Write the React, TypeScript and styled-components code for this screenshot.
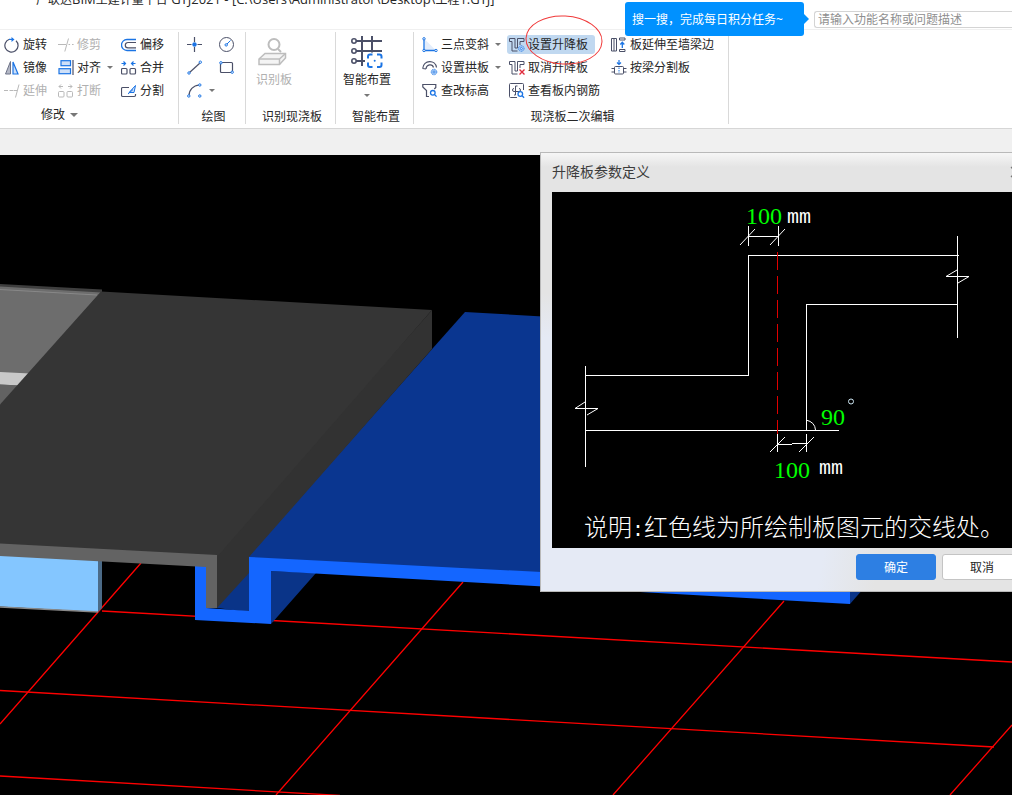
import React from "react";
import styled, { createGlobalStyle, css } from "styled-components";

const INK = "#4b5068";
const BLUE = "#1b74e4";
const PALE = "#cfe0f8";
const OFF = "#b9b9b9";

const GlobalStyle = createGlobalStyle`
  *, *::before, *::after { box-sizing: border-box; }
  body {
    margin: 0;
    font-family: "Noto Sans", "Noto Sans CJK SC", sans-serif;
    font-size: 12px;
    line-height: 16px;
    color: #262626;
    background: #fff;
  }
  button, input { font: inherit; color: inherit; }
`;

const Page = styled.div`
  display: flex;
  flex-direction: column;
  min-height: 100vh;
  overflow: hidden;
`;

/* ---------- title bar ---------- */

const TitleBar = styled.header`
  display: flex;
  align-items: flex-start;
  justify-content: space-between;
  height: 29px;
  padding-left: 36px;
`;

const AppTitle = styled.h1`
  margin: -8px 0 0;
  font-size: 12px;
  font-weight: 400;
  line-height: 16px;
  white-space: nowrap;
`;

const Latin = styled.span`
  font-family: "Open Sans", sans-serif;
  font-size: 13px;
  line-height: 1;
`;

const Search = styled.form`
  position: relative;
  width: 198px;
  padding-top: 11px;
`;

const SearchInput = styled.input`
  display: block;
  width: 100%;
  height: 17px;
  padding: 0 3px;
  border: 1px solid #d4d4d4;
  border-right: 0;
  border-radius: 3px 0 0 3px;
  background: #fff;
  line-height: 15px;
  outline: none;
  &::placeholder { color: #8f8f8f; opacity: 1; }
`;

const Bubble = styled.div`
  position: absolute;
  z-index: 3;
  top: 2px;
  right: calc(100% + 10px);
  width: 179px;
  height: 34px;
  padding: 0 7px;
  border-radius: 3px;
  background: #0091ff;
  color: #fff;
  line-height: 36px;
  white-space: nowrap;
  &::after {
    content: "";
    position: absolute;
    top: 12px;
    left: 100%;
    border: 5px solid transparent;
    border-left-color: #0091ff;
    border-right: 0;
  }
`;

/* ---------- ribbon ---------- */

const Ribbon = styled.nav`
  display: flex;
  padding: 2px 0 4px;
  border-top: 1px solid #f0f0f0;
  border-bottom: 1px solid #d6d6d6;
`;

const Group = styled.section<{ $width: number; $inset: number }>`
  display: flex;
  flex-direction: column;
  justify-content: space-between;
  flex: none;
  width: ${(p) => p.$width}px;
  height: 92px;
  border-right: 1px solid #d9d9d9;
  & > div { padding-left: ${(p) => p.$inset}px; }
`;

const Columns = styled.div`
  display: flex;
  padding-top: 1px;
`;

const Column = styled.div<{ $width?: number }>`
  display: flex;
  flex-direction: column;
  align-items: flex-start;
  flex: none;
  width: ${(p) => (p.$width ? p.$width + "px" : "auto")};
`;

const GroupLabel = styled.h2`
  margin: 0;
  padding-left: 3px;
  font-size: 12px;
  font-weight: 400;
  line-height: 14px;
  text-align: center;
`;

const GroupMenu = styled.button`
  display: flex;
  align-items: center;
  gap: 5px;
  height: 16px;
  margin: 0 0 1px 41px;
  padding: 0;
  border: 0;
  background: none;
`;

const Command = styled.button<{ $active?: boolean }>`
  position: relative;
  display: flex;
  align-items: center;
  gap: 3px;
  height: 19px;
  margin: 2px 0;
  padding: 0 2px;
  border: 0;
  border-radius: 3px;
  background: none;
  white-space: nowrap;
  svg { flex: none; }
  &:disabled { color: #b0b0b0; }
  ${(p) =>
    p.$active &&
    css`
      width: 88px;
      background: #c0d8f0;
    `}
`;

const BigCommand = styled.button`
  display: flex;
  flex-direction: column;
  align-items: center;
  gap: 4px;
  padding: 3px 0 0;
  border: 0;
  background: none;
  &:disabled { color: #b0b0b0; }
`;

const Caret = styled.span<{ $big?: boolean }>`
  border: ${(p) => (p.$big ? 4 : 3)}px solid transparent;
  border-top-color: #777;
  border-bottom: 0;
  margin-left: ${(p) => (p.$big ? 0 : 3)}px;
`;

const CaretBelow = styled(Caret)`
  margin: 2px 0 0;
`;

const Marker = styled.svg`
  position: absolute;
  z-index: 2;
  top: -20px;
  left: 17px;
  pointer-events: none;
`;

/* ---------- workspace ---------- */

const Workspace = styled.main`
  position: relative;
  display: flex;
  flex-direction: column;
  flex: 1;
  overflow: hidden;
`;

const OptionStrip = styled.div`
  height: 26px;
  background: #f0f0f0;
`;

const Viewport = styled.div`
  flex: 1;
  background: #000;
  svg { display: block; width: 100%; height: 640px; }
`;

/* ---------- dialog ---------- */

const Dialog = styled.section`
  position: absolute;
  top: 23px;
  left: 540px;
  width: 494px;
  padding: 0 11px 11px;
  border: 1px solid #b9b9b9;
  background:
    linear-gradient(#f6f6f6, rgba(246, 246, 246, 0) 14px),
    linear-gradient(#e4e4e4 140px, rgba(228, 228, 228, 0) 185px),
    linear-gradient(100deg, #e5eaf5 62%, #e4e4e4 72%);
`;

const DialogHead = styled.div`
  display: flex;
  align-items: center;
  justify-content: space-between;
  height: 39px;
  padding-bottom: 2px;
`;

const DialogTitle = styled.h2`
  margin: 0;
  color: #3c3c3c;
  font-size: 14px;
  font-weight: 400;
  line-height: 20px;
`;

const CloseButton = styled.button`
  display: flex;
  padding: 0;
  border: 0;
  background: none;
`;

const Diagram = styled.svg`
  display: block;
  width: 100%;
  background: #000;
  text { white-space: pre; }
`;

const DialogFoot = styled.div`
  display: flex;
  justify-content: flex-end;
  gap: 6px;
  padding-top: 6px;
`;

const DialogButton = styled.button<{ $primary?: boolean }>`
  width: 80px;
  height: 26px;
  padding: 1px 0 0;
  border: 1px solid ${(p) => (p.$primary ? "#2d7fe3" : "#c4c4c4")};
  border-radius: 3px;
  background: ${(p) => (p.$primary ? "#2d7fe3" : "#fff")};
  color: ${(p) => (p.$primary ? "#fff" : "#262626")};
`;

/* ---------- icons ---------- */

const Icon = ({ children }: { children: React.ReactNode }) => (
  <svg width="16" height="16" viewBox="0 0 16 16" fill="none" stroke={INK} aria-hidden="true">
    {children}
  </svg>
);

const Gear = ({ x, y }: { x: number; y: number }) => (
  <g stroke={BLUE} strokeWidth="0.8">
    <circle cx={x} cy={y} r="2.8" fill="#a9cbf5" strokeDasharray="1.2 0.6" />
    <circle cx={x} cy={y} r="1" fill="#fff" />
  </g>
);

const Lens = ({ x, y }: { x: number; y: number }) => (
  <g stroke={BLUE} strokeWidth="1.3">
    <circle cx={x} cy={y} r="2.3" fill="#fff" />
    <path d={`M${x + 1.8} ${y + 1.8}l2 2`} />
  </g>
);

const Dot = ({ x, y }: { x: number; y: number }) => (
  <circle cx={x} cy={y} r="1.2" fill="#fff" stroke={BLUE} />
);

const StepProfile = () => (
  <path d="M.5 1.500H6V11h2.500V1.500H15v3h-4V8M.5 1.500v3H3V14h5.500" />
);

const icons = {
  rotate: (
    <Icon>
      <path d="M5.500 2.200a6.600 6.600 0 1 0 6.500 1.500" strokeWidth="1.200" />
      <path d="M5 2.400h3.500" stroke={BLUE} strokeWidth="1.200" />
      <path d="M7.500 0l3 2.400-3 2.600z" fill={BLUE} stroke="none" />
    </Icon>
  ),
  mirror: (
    <Icon>
      <path d="M6.500 1.500v12.500H1.500z" fill="#b4b8c6" stroke="#6d7287" />
      <path d="M9 2V14h5z" fill={PALE} stroke={BLUE} strokeWidth="1.200" />
    </Icon>
  ),
  extend: (
    <Icon>
      <path d="M0 7.500h4M5.500 7.500h4M10 7.500h3M15 1.500L11.500 14.500" stroke={OFF} />
    </Icon>
  ),
  trim: (
    <Icon>
      <path d="M0 7.500h8M10.500 7.500h1.600M14 7.500h1.600M10.500 1.500L6.800 14.500" stroke={OFF} />
    </Icon>
  ),
  align: (
    <Icon>
      <rect x="3" y="0.7" width="9.500" height="5" fill={PALE} stroke={BLUE} strokeWidth="1.200" />
      <rect x="1" y="8.700" width="11.500" height="5" fill={PALE} stroke={BLUE} strokeWidth="1.200" />
      <path d="M15 0v15" strokeWidth="1.200" />
    </Icon>
  ),
  breakUp: (
    <Icon>
      <g stroke={OFF}>
        <rect x="0.500" y="8.500" width="5.500" height="5.500" rx="1" />
        <rect x="9" y="8.500" width="5.500" height="5.500" rx="1" />
        <path d="M1 3.500h4M3 1.500l-2 2 2 2M10 3.500h4M12 1.500l2 2-2 2" />
      </g>
    </Icon>
  ),
  offset: (
    <Icon>
      <path d="M15 2.500H6a5.500 5.500 0 0 0 0 11h9" stroke={BLUE} strokeWidth="1.300" />
      <path d="M15 5.500H7a2.700 2.700 0 0 0 0 5.400h8" strokeWidth="1.200" />
    </Icon>
  ),
  merge: (
    <Icon>
      <rect x="0.500" y="8.500" width="5.500" height="5.500" rx="1" strokeWidth="1.200" />
      <rect x="9" y="8.500" width="5.500" height="5.500" rx="1" strokeWidth="1.200" />
      <g stroke={BLUE} strokeWidth="1.200">
        <path d="M0.500 3.500h4M2.500 1.500l2 2-2 2M14.500 3.500h-4M12.500 1.500l-2 2 2 2" />
      </g>
    </Icon>
  ),
  split: (
    <Icon>
      <path
        d="M8 4.500H1.700c-.7 0-1.200.5-1.200 1.200v6.600c0 .7.5 1.200 1.200 1.200h11.600c.7 0 1.200-.5 1.200-1.200V11"
        strokeWidth="1.200"
      />
      <path d="M8 9.500L14.500 2.500L13 9.500z" fill={PALE} stroke={BLUE} />
      <path d="M7 11l5-4.500" stroke={BLUE} />
    </Icon>
  ),
  point: (
    <Icon>
      <path d="M7.500 0v5M7.500 10v5M0 7.500h4.500M10.500 7.500H15" strokeWidth="1.200" />
      <circle cx="7.500" cy="7.500" r="2.200" fill={BLUE} stroke="none" />
    </Icon>
  ),
  line: (
    <Icon>
      <path d="M2 13L13 3" strokeWidth="1.200" />
      <Dot x={2} y={13} />
      <Dot x={13.3} y={2.2} />
    </Icon>
  ),
  arc: (
    <Icon>
      <path d="M2 13C2 7 6 2.500 12.500 2" strokeWidth="1.200" />
      <Dot x={1.8} y={13} />
      <Dot x={12.8} y={2} />
      <Dot x={12.8} y={13} />
    </Icon>
  ),
  circle: (
    <Icon>
      <circle cx="7.500" cy="7.500" r="7" />
      <path d="M7.500 7.500l4-4" stroke={BLUE} />
      <Dot x={7.2} y={7.9} />
    </Icon>
  ),
  rect: (
    <Icon>
      <rect x="1.500" y="2.500" width="12" height="10" rx="1" strokeWidth="1.200" />
      <Dot x={1.9} y={2.8} />
      <Dot x={13.2} y={12.2} />
    </Icon>
  ),
  slope: (
    <Icon>
      <path d="M2.500 2v11.500H14z" fill="#e3edfb" stroke="none" />
      <path d="M2 2v11.500h11.500" stroke={BLUE} strokeWidth="1.300" />
      <Dot x={2} y={1.8} />
      <Dot x={2} y={13.5} />
      <Dot x={14} y={13.5} />
    </Icon>
  ),
  arch: (
    <Icon>
      <path
        d="M.7 8.500C1.500-.5 13.500-.5 14.500 7.500M4 9C4.500 4 10.500 3.500 11.500 7.500M.7 8.500L4 9"
        strokeWidth="1.200"
      />
      <Gear x={12} y={12} />
    </Icon>
  ),
  level: (
    <Icon>
      <path d="M7 13.500H4.500V7.500L.8 4V1.500h13V4.500L12.300 6" strokeWidth="1.200" />
      <Lens x={10.8} y={9.8} />
    </Icon>
  ),
  step: (
    <Icon>
      <StepProfile />
      <Gear x={12.3} y={11.5} />
    </Icon>
  ),
  stepCancel: (
    <Icon>
      <StepProfile />
      <path d="M10.500 9.500l5 5M15.500 9.500l-5 5" stroke="#e02b3c" strokeWidth="1.400" />
    </Icon>
  ),
  rebar: (
    <Icon>
      <path d="M8 14.500H1.500a1 1 0 0 1-1-1v-12a1 1 0 0 1 1-1h12a1 1 0 0 1 1 1V7" />
      <path d="M6.500 3v9M8.500 3h-2M6.500 12H5M5 5.500a1.500 1.500 0 0 0 0 3h5a1.500 1.500 0 0 0 0-3" />
      <Lens x={11.3} y={11} />
    </Icon>
  ),
  toWall: (
    <Icon>
      <path d="M.5 1.500H3v12.500H.5zM3 1.500h2.500v12.500H3M8.500 1h5.500v2H8.500zM8.500 12.500h5.500v2H8.500z" />
      <path d="M11.300 11V5.500M9.300 7.500l2-2.200 2 2.200" stroke={BLUE} strokeWidth="1.300" />
    </Icon>
  ),
  byBeam: (
    <Icon>
      <rect x="3.500" y="6.500" width="9" height="7.500" rx="1" />
      <path d="M3.500 8.500H.5M3.500 12H.5M12.500 8.500h3M12.500 12h3" />
      <path d="M8 0v4M6 2.500l2 2 2-2" stroke={BLUE} strokeWidth="1.200" />
      <path d="M8 7.500v5.500" stroke={BLUE} strokeDasharray="1.500 1" />
    </Icon>
  ),
};

const RecognizeIcon = () => (
  <svg width="32" height="32" viewBox="0 0 32 32" fill="none" stroke="#bdbdbd" strokeWidth="2" aria-hidden="true">
    <circle cx="16" cy="8.500" r="5.500" />
    <path d="M20 13l3 3" />
    <path d="M7 17.500h20.500v4.500l-6 6.500H1V23z" fill="#f4f4f4" strokeWidth="1.500" />
    <path d="M1 23h20.500v5.500M21.500 23l6-5.500" strokeWidth="1.500" />
  </svg>
);

const LayoutIcon = () => (
  <svg width="32" height="32" viewBox="0 0 32 32" fill="none" stroke={INK} strokeWidth="2" aria-hidden="true">
    <path d="M5 5h26M5 15h26M5 25h9M11 0v30M21 0v18" />
    <circle cx="3" cy="5" r="2.200" fill="#fff" strokeWidth="1.600" />
    <circle cx="3" cy="15" r="2.200" fill="#fff" strokeWidth="1.600" />
    <circle cx="3" cy="25" r="2.200" fill="#fff" strokeWidth="1.600" />
    <rect x="15" y="16.500" width="17" height="15.500" fill="#fff" stroke="none" />
    <path
      d="M17 22.500V20.500a2 2 0 0 1 2-2h2.500M26 18.500h2.500a2 2 0 0 1 2 2v2M30.500 26.500V29a2 2 0 0 1-2 2H26M21.500 31H19a2 2 0 0 1-2-2v-2.500"
      stroke={BLUE}
    />
    <circle cx="23.700" cy="24.700" r="1" fill={BLUE} stroke="none" />
  </svg>
);

/* ---------- drawings ---------- */

const Scene = () => (
  <svg viewBox="0 155 1012 640" preserveAspectRatio="xMinYMin slice" role="img" aria-label="三维视图">
    <g stroke="#f00" strokeWidth="1.300">
      <path d="M102 611L1012 662M0 690.500L994 747M0 776L340 795.500" />
      <path d="M141 563L0 724M463 582L276 795M784 601L613 795M1012 725L950 795" />
    </g>
    <path d="M465 312L880 336L850 589L249 558L249 555z" fill="#0a3690" />
    <path d="M271 571L316 573L271 624zM217 608L217 560L249 560V612zM850 588L864 588L850 604z" fill="#0a3488" />
    <path d="M249 557L850 588V604L271 571V624L195 620V560H206V608L249 611z" fill="#1466ff" />
    <path d="M0 284L102 289.500V293H0z" fill="#3e3e3e" />
    <path d="M0 286.500L101 292.500L2 404H0z" fill="#6d6d6d" />
    <path d="M0 289.500L97 295" stroke="#888" />
    <path d="M0 372L30 373.500L19 385.500L0 384.500z" fill="#c9c9c9" />
    <path d="M0 384.500L20 385.500L2 406H0z" fill="#626262" />
    <path d="M0 554L98 559V612L0 606.500z" fill="#84c6ff" />
    <path d="M98 559L102 560V608L98 612z" fill="#4b6a87" />
    <path d="M0 607L98 612" stroke="#888" strokeWidth="1.500" />
    <path d="M432 310V349L249 557V573L217 608L210 560z" fill="#323232" />
    <path d="M0 404.500L101 291.500L432 310L217 557L0 546z" fill="#353535" />
    <path d="M0 543.500L217 555V608H206V567L0 556z" fill="#636363" />
  </svg>
);

const SectionDiagram = () => (
  <Diagram viewBox="0 0 470 356" role="img" aria-label="升降板剖面">
    <g fill="none" stroke="#fff" shapeRendering="crispEdges">
      <path d="M33.500 174V275M33 183.500H196.500V63.500H407M405.500 44V146M405 112.500H254.500V238.500M33 238.500H287" />
      <path d="M196.500 34V54M226.500 34V54M196 44.500H227" />
      <path d="M225.500 242V260M254.500 242V260M225 252.500H240M240 251.500H255" />
    </g>
    <g fill="none" stroke="#fff">
      <path d="M405 78L394 84.500H417L406 91M33 210L23 216.500H46L35 223" />
      <path d="M188 53L203 37M218 53L233 37M218 260L233 245M247 260L262 245" />
      <path d="M254 228Q263 230 263.500 238" />
      <circle cx="299" cy="209.500" r="2.500" stroke="#cfe8f5" />
    </g>
    <path d="M225.500 60V242" stroke="#e00000" strokeDasharray="18 6" shapeRendering="crispEdges" />
    <g fill="#0f0" fontFamily="'Liberation Serif', serif" fontSize="24">
      <text x="194" y="32">100</text>
      <text x="269" y="233">90</text>
      <text x="222" y="286">100</text>
    </g>
    <g fill="#fff" fontFamily="'Liberation Mono', monospace" fontSize="20">
      <text x="235" y="31">mm</text>
      <text x="267" y="282">mm</text>
    </g>
    <text x="32" y="344" fill="#fff" fontFamily="'Noto Sans CJK SC', sans-serif" fontSize="24" fontWeight="300">
      说明<tspan fontFamily="'Liberation Mono', monospace" fontSize="20">:</tspan>红色线为所绘制板图元的交线处。
    </text>
  </Diagram>
);

/* ---------- commands ---------- */

type CommandProps = {
  icon: keyof typeof icons;
  text?: string;
  label?: string;
  menu?: boolean;
  disabled?: boolean;
  active?: boolean;
  children?: React.ReactNode;
};

const Cmd = ({ icon, text, label, menu, disabled, active, children }: CommandProps) => (
  <Command type="button" disabled={disabled} $active={active} aria-label={label}>
    {icons[icon]}
    {text && <span>{text}</span>}
    {menu && <Caret />}
    {children}
  </Command>
);

export default function App() {
  return (
    <Page>
      <GlobalStyle />
      <TitleBar>
        <AppTitle>
          广联达<Latin>BIM</Latin>土建计量平台
          <Latin>{" GTJ2021 - [C:\\Users\\Administrator\\Desktop\\"}</Latin>
          工程<Latin>1.GTJ]</Latin>
        </AppTitle>
        <Search onSubmit={(e) => e.preventDefault()}>
          <Bubble>搜一搜，完成每日积分任务~</Bubble>
          <SearchInput aria-label="搜索功能" placeholder="请输入功能名称或问题描述" />
        </Search>
      </TitleBar>

      <Ribbon>
        <Group $width={179} $inset={2}>
          <Columns>
            <Column $width={54}>
              <Cmd icon="rotate" text="旋转" />
              <Cmd icon="mirror" text="镜像" />
              <Cmd icon="extend" text="延伸" disabled />
            </Column>
            <Column $width={63}>
              <Cmd icon="trim" text="修剪" disabled />
              <Cmd icon="align" text="对齐" menu />
              <Cmd icon="breakUp" text="打断" disabled />
            </Column>
            <Column>
              <Cmd icon="offset" text="偏移" />
              <Cmd icon="merge" text="合并" />
              <Cmd icon="split" text="分割" />
            </Column>
          </Columns>
          <GroupMenu type="button">
            修改
            <Caret $big />
          </GroupMenu>
        </Group>

        <Group $width={67} $inset={6}>
          <Columns>
            <Column $width={32}>
              <Cmd icon="point" label="点" />
              <Cmd icon="line" label="直线" />
              <Cmd icon="arc" label="弧" menu />
            </Column>
            <Column>
              <Cmd icon="circle" label="圆" />
              <Cmd icon="rect" label="矩形" />
            </Column>
          </Columns>
          <GroupLabel>绘图</GroupLabel>
        </Group>

        <Group $width={90} $inset={10}>
          <Columns>
            <BigCommand type="button" disabled>
              <RecognizeIcon />
              识别板
            </BigCommand>
          </Columns>
          <GroupLabel>识别现浇板</GroupLabel>
        </Group>

        <Group $width={78} $inset={7}>
          <Columns>
            <BigCommand type="button">
              <LayoutIcon />
              智能布置
              <CaretBelow />
            </BigCommand>
          </Columns>
          <GroupLabel>智能布置</GroupLabel>
        </Group>

        <Group $width={315} $inset={6}>
          <Columns>
            <Column $width={87}>
              <Cmd icon="slope" text="三点变斜" menu />
              <Cmd icon="arch" text="设置拱板" menu />
              <Cmd icon="level" text="查改标高" />
            </Column>
            <Column $width={102}>
              <Cmd icon="step" text="设置升降板" active>
                <Marker width="80" height="52" viewBox="0 0 80 52" fill="none" aria-hidden="true">
                  <ellipse cx="40" cy="25" rx="38" ry="24" stroke="#f03a3a" transform="rotate(3 40 25)" />
                </Marker>
              </Cmd>
              <Cmd icon="stepCancel" text="取消升降板" />
              <Cmd icon="rebar" text="查看板内钢筋" />
            </Column>
            <Column>
              <Cmd icon="toWall" text="板延伸至墙梁边" />
              <Cmd icon="byBeam" text="按梁分割板" />
            </Column>
          </Columns>
          <GroupLabel>现浇板二次编辑</GroupLabel>
        </Group>
      </Ribbon>

      <Workspace>
        <OptionStrip />
        <Viewport>
          <Scene />
        </Viewport>
        <Dialog role="dialog" aria-labelledby="dialog-title">
          <DialogHead>
            <DialogTitle id="dialog-title">升降板参数定义</DialogTitle>
            <CloseButton type="button" aria-label="关闭">
              <svg width="12" height="12" viewBox="0 0 12 12" stroke="#777" strokeWidth="1.300" aria-hidden="true">
                <path d="M1 1l10 10M11 1L1 11" />
              </svg>
            </CloseButton>
          </DialogHead>
          <SectionDiagram />
          <DialogFoot>
            <DialogButton type="button" $primary>
              确定
            </DialogButton>
            <DialogButton type="button">取消</DialogButton>
          </DialogFoot>
        </Dialog>
      </Workspace>
    </Page>
  );
}
